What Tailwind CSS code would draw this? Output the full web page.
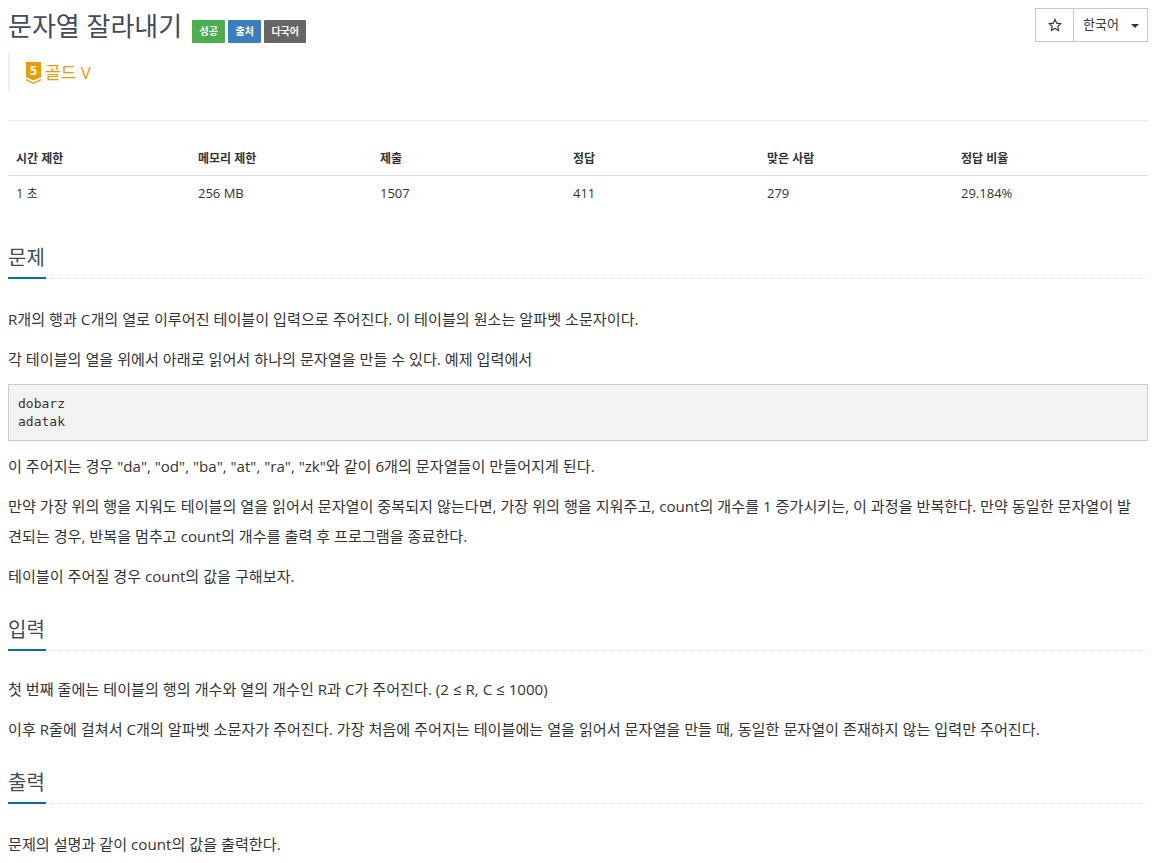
<!DOCTYPE html>
<html lang="ko">
<head>
<meta charset="utf-8">
<script src="https://cdn.jsdelivr.net/npm/@tailwindcss/browser@4"></script>
</head>
<body class="bg-white overflow-hidden">
<div class="w-[1163px] h-[863px] overflow-hidden pl-2 pr-[15px] text-[#333] text-[15.13px] font-['Open_Sans','Noto_Sans_CJK_KR',sans-serif]">
  <div class="flex items-start justify-between h-[53px]">
    <div class="flex items-center pt-[7px]">
      <h1 class="text-[26px] leading-[38px] font-normal text-[#444b53]">문자열 잘라내기</h1>
      <div class="flex gap-[3px] ml-[10px] mt-[10px]">
        <span class="h-[23px] w-[33px] flex items-center justify-center bg-[#4cae4f] text-white text-[10px] font-bold rounded-[1px]">성공</span>
        <span class="h-[23px] w-[33px] flex items-center justify-center bg-[#3a7ebf] text-white text-[10px] font-bold rounded-[1px]">출처</span>
        <span class="h-[23px] w-[42px] flex items-center justify-center bg-[#666] text-white text-[10px] font-bold rounded-[1px]">다국어</span>
      </div>
    </div>
    <div class="flex mt-2 h-[34px] border border-[#c8c8c8] text-[13px]">
      <div class="w-[38px] flex items-center justify-center border-r border-[#c8c8c8]">
        <svg width="14" height="14" viewBox="0 0 24 24" fill="none" stroke="#333" stroke-width="2"><path d="M12 2.500l2.900 6.400 7 .8-5.200 4.700 1.400 6.900-6.100-3.500-6.100 3.500 1.400-6.900-5.200-4.700 7-.8z"/></svg>
      </div>
      <div class="w-[73px] flex items-center pl-[9px] gap-[12px]">
        <span>한국어</span>
        <span class="w-0 h-0 border-x-[4px] border-x-transparent border-t-[4px] border-t-[#333] mt-[2px]"></span>
      </div>
    </div>
  </div>

  <div class="h-[38px] border-l-[2px] border-[#eee] pl-[15px] flex items-center gap-[3px] text-[17px] text-[#ec9a00]">
    <svg width="17" height="22" viewBox="0 0 17 22" class="mt-[2px]"><path d="M1 0h15v15l-7.500 3.500L1 15z" fill="#ec9a00"/><path d="M1 17l7.500 3.500L16 17v1.500l-7.500 3.500L1 18.500z" fill="#ec9a00"/><text x="8.500" y="13" font-size="13" font-weight="700" fill="#fff" text-anchor="middle" font-family="Open Sans">5</text></svg>
    <span class="mt-[2px]">골드 V</span>
  </div>

  <div class="mt-[29px] border-t border-[#eee] pt-[19px]">
    <div class="grid grid-cols-[182px_182px_193px_194px_194px_1fr] h-[36px] pt-[2px] items-center border-b border-[#ddd] font-bold text-[12px] pl-2">
      <span>시간 제한</span><span>메모리 제한</span><span>제출</span><span>정답</span><span>맞은 사람</span><span>정답 비율</span>
    </div>
    <div class="grid grid-cols-[182px_182px_193px_194px_194px_1fr] h-[35px] items-center text-[13px] pl-2">
      <span>1 <span class="text-[12px]">초</span></span><span>256 MB</span><span>1507</span><span>411</span><span>279</span><span>29.184%</span>
    </div>
  </div>

  <section class="mt-[21px]">
    <div class="border-b border-dotted border-[#e4e4e4] h-[47px] flex items-end">
      <h2 class="text-[20px] leading-[22px] h-[32px] w-[38px] text-[#444b53] border-b-2 border-[#0a6ab0] -mb-px font-normal">문제</h2>
    </div>
    <p class="mt-[29px] leading-[22px]">R개의 행과 C개의 열로 이루어진 테이블이 입력으로 주어진다. 이 테이블의 원소는 알파벳 소문자이다.</p>
    <p class="mt-[18px] leading-[22px]">각 테이블의 열을 위에서 아래로 읽어서 하나의 문자열을 만들 수 있다. 예제 입력에서</p>
    <pre class="mt-[14px] h-[57px] bg-[#f3f3f3] border border-[#ccc] px-[9px] pt-[10px] text-[13px] leading-[18px] font-['DejaVu_Sans_Mono',monospace]">dobarz
adatak</pre>
    <p class="mt-[14px] leading-[22px]">이 주어지는 경우 "da", "od", "ba", "at", "ra", "zk"와 같이 6개의 문자열들이 만들어지게 된다.</p>
    <p class="mt-[14px] leading-[30px] pr-[6px]">만약 가장 위의 행을 지워도 테이블의 열을 읽어서 문자열이 중복되지 않는다면, 가장 위의 행을 지워주고, count의 개수를 1 증가시키는, 이 과정을 반복한다. 만약 동일한 문자열이 발견되는 경우, 반복을 멈추고 count의 개수를 출력 후 프로그램을 종료한다.</p>
    <p class="mt-[14px] leading-[22px]">테이블이 주어질 경우 count의 값을 구해보자.</p>
  </section>

  <section>
    <div class="border-b border-dotted border-[#e4e4e4] h-[47px] flex items-end mt-[17px]">
      <h2 class="text-[20px] leading-[22px] h-[32px] w-[38px] text-[#444b53] border-b-2 border-[#0a6ab0] -mb-px font-normal">입력</h2>
    </div>
    <p class="mt-[27px] leading-[22px]">첫 번째 줄에는 테이블의 행의 개수와 열의 개수인 R과 C가 주어진다. (2 ≤ R, C ≤ 1000)</p>
    <p class="mt-[18px] leading-[22px]">이후 R줄에 걸쳐서 C개의 알파벳 소문자가 주어진다. 가장 처음에 주어지는 테이블에는 열을 읽어서 문자열을 만들 때, 동일한 문자열이 존재하지 않는 입력만 주어진다.</p>
  </section>

  <section>
    <div class="border-b border-dotted border-[#e4e4e4] h-[47px] flex items-end mt-[17px]">
      <h2 class="text-[20px] leading-[22px] h-[32px] w-[38px] text-[#444b53] border-b-2 border-[#0a6ab0] -mb-px font-normal">출력</h2>
    </div>
    <p class="mt-[29px] leading-[22px]">문제의 설명과 같이 count의 값을 출력한다.</p>
  </section>
</div>
</body>
</html>
